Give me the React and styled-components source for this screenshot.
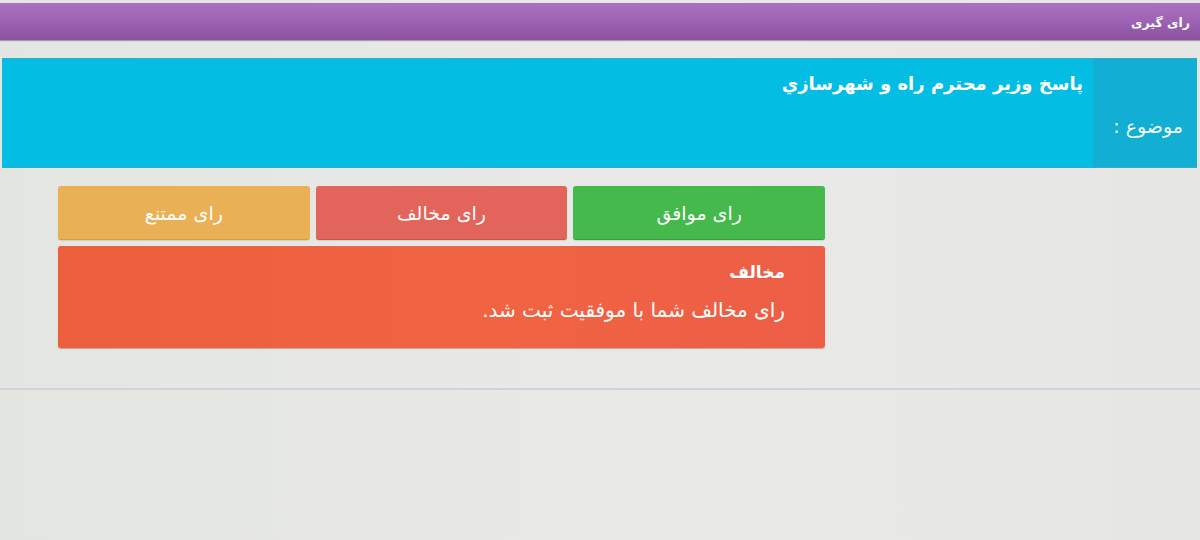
import React from "react";
import styled, { createGlobalStyle } from "styled-components";

const Global = createGlobalStyle`
  html, body { margin: 0; padding: 0; }
  body {
    background: #e5e7e3;
    font-family: "DejaVu Sans", "Noto Sans", sans-serif;
    direction: rtl;
  }
`;

const Page = styled.div`
  width: 1200px;
  height: 540px;
  overflow: hidden;
  background: linear-gradient(90deg, #e4e6e2 0%, #e9eae7 60%, #e6e7e4 100%);
  display: flex;
  flex-direction: column;
  padding-top: 3px;
  box-sizing: border-box;
`;

const TopBar = styled.header`
  height: 37px;
  background: linear-gradient(180deg, #ac72c2 0%, #9a5fb0 60%, #8a529f 100%);
  display: flex;
  align-items: center;
  padding: 2px 10px 0;
  box-sizing: border-box;
  color: #fff;
  font-weight: bold;
  font-size: 12.5px;
  box-shadow: 0 1px 1px rgba(80, 40, 90, 0.4);
`;

const Content = styled.main`
  padding-top: 18px;
  display: flex;
  flex-direction: column;
`;

const TopicPanel = styled.section`
  height: 108px;
  margin-left: 2px;
  margin-right: 3px;
  display: flex;
  background: #03bde2;
  border-top: 1px solid #3aa8c8;
  border-bottom: 1px solid #3aa8c8;
`;

const TopicLabel = styled.div`
  width: 104px;
  background: #12aed3;
  color: #f2fbff;
  font-size: 19px;
  display: flex;
  align-items: center;
  padding-right: 14px;
  padding-top: 26px;
  box-sizing: border-box;
`;

const TopicTitle = styled.div`
  flex: 1;
  color: #fff;
  font-weight: bold;
  font-size: 18px;
  padding: 14px 10px 0 0;
`;

const VoteArea = styled.div`
  width: 767px;
  margin-right: 375px;
  margin-top: 18px;
  display: flex;
  flex-direction: column;
  gap: 6px;
`;

const ButtonRow = styled.div`
  display: flex;
  gap: 6px;
`;

const VoteButton = styled.button`
  flex: 1;
  height: 54px;
  border: none;
  border-radius: 3px;
  background: ${(p) => p.$bg};
  border-bottom: 1px solid ${(p) => p.$edge};
  color: #fff;
  font-family: inherit;
  font-size: 19px;
  padding: 0;
  cursor: pointer;
  box-shadow: 0 1px 1px rgba(0, 0, 0, 0.1);
`;

const Alert = styled.div`
  height: 102px;
  border-radius: 3px;
  background: linear-gradient(90deg, #ec5f3c 0%, #f06442 55%, #ec5e46 100%);
  box-shadow: 0 1px 1px rgba(120, 40, 20, 0.35);
  color: #fff;
  padding: 16px 40px 0 0;
  box-sizing: border-box;
`;

const AlertTitle = styled.div`
  font-weight: bold;
  font-size: 17px;
`;

const AlertText = styled.div`
  margin-top: 16px;
  font-size: 20px;
`;

const Divider = styled.hr`
  margin: 40px 0 0;
  border: none;
  height: 2px;
  background: #d9cde0;
`;

export default function App() {
  return (
    <>
      <Global />
      <Page>
        <TopBar>رای گیری</TopBar>
        <Content>
          <TopicPanel>
            <TopicLabel>موضوع :</TopicLabel>
            <TopicTitle>پاسخ وزیر محترم راه و شهرسازي</TopicTitle>
          </TopicPanel>
          <VoteArea>
            <ButtonRow>
              <VoteButton $bg="#45b94c" $edge="#36a03e">رای موافق</VoteButton>
              <VoteButton $bg="#e3645a" $edge="#c9524a">رای مخالف</VoteButton>
              <VoteButton $bg="#eab055" $edge="#d59c44">رای ممتنع</VoteButton>
            </ButtonRow>
            <Alert>
              <AlertTitle>مخالف</AlertTitle>
              <AlertText>رای مخالف شما با موفقیت ثبت شد.</AlertText>
            </Alert>
          </VoteArea>
          <Divider />
        </Content>
      </Page>
    </>
  );
}
